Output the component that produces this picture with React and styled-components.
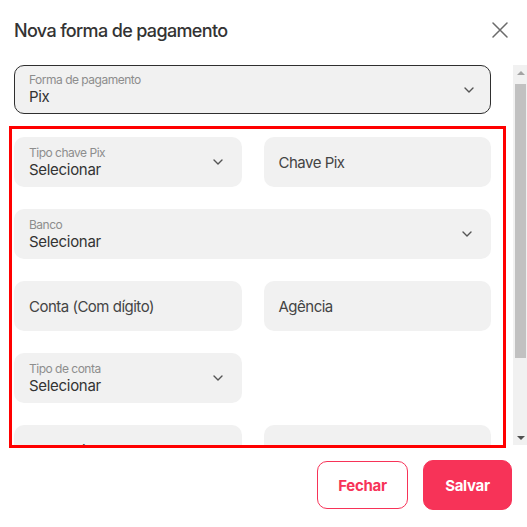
import React from "react";
import styled, { createGlobalStyle } from "styled-components";

const GlobalStyle = createGlobalStyle`
  html, body { margin: 0; padding: 0; background: #fff; }
  body { font-family: Inter, "Noto Sans", "Liberation Sans", sans-serif; color: #333; }
  * { box-sizing: border-box; }
`;

const Dialog = styled.div`
  position: relative;
  width: 527px;
  height: 527px;
  background: #fff;
  display: flex;
  flex-direction: column;
`;

const Header = styled.div`
  height: 60px;
  padding: 0 18px 0 14px;
  display: flex;
  align-items: center;
  justify-content: space-between;
`;

const Title = styled.h2`
  margin: 0;
  font-size: 18px;
  font-weight: 500;
  color: #333;
  letter-spacing: -0.65px;
`;

const CloseButton = styled.button`
  border: 0;
  background: none;
  padding: 0;
  width: 18px;
  height: 18px;
  display: flex;
  align-items: center;
  justify-content: center;
  color: #6b6b6b;
  cursor: pointer;
`;

const Body = styled.div`
  margin-top: 5px;
  height: 380px;
  display: flex;
`;

const Viewport = styled.div`
  flex: 1;
  overflow: hidden;
  padding: 0 22px 0 14px;
`;

const Scrollbar = styled.div`
  width: 14px;
  background: #f1f1f1;
  display: flex;
  flex-direction: column;
`;

const ScrollArrow = styled.div`
  height: 15px;
  display: flex;
  align-items: center;
  justify-content: center;
  padding-left: 1px;
`;

const ScrollTrack = styled.div`
  flex: 1;
  padding: 4px 1px 0 2px;
`;

const ScrollThumb = styled.div`
  height: 274px;
  background: #c1c1c1;
`;

const FieldBox = styled.div`
  position: relative;
  height: ${(p) => (p.$outlined ? "49px" : "50px")};
  border-radius: 10px;
  background: #f1f1f1;
  border: ${(p) => (p.$outlined ? "1px solid #2f2f2f" : "0")};
  padding: ${(p) => (p.$outlined ? "0 16px 0 14px" : "0 19px 0 15px")};
  display: flex;
  align-items: center;
  justify-content: space-between;
  grid-column: ${(p) => (p.$wide ? "1 / -1" : "auto")};
`;

const FieldText = styled.div`
  display: flex;
  flex-direction: column;
  justify-content: center;
`;

const Label = styled.span`
  font-size: 12px;
  line-height: 14px;
  color: #8d8d8d;
  letter-spacing: -0.5px;
`;

const Value = styled.span`
  font-size: 15px;
  line-height: 19px;
  color: #333;
  letter-spacing: -0.3px;
`;

const Placeholder = styled.span`
  font-size: 15px;
  color: #444;
  letter-spacing: -0.5px;
`;

const Grid = styled.div`
  margin-top: 23px;
  display: grid;
  grid-template-columns: 1fr 1fr;
  column-gap: 22px;
  row-gap: 22px;
  padding-bottom: 2px;
`;

const Footer = styled.div`
  flex: 1;
  display: flex;
  align-items: center;
  justify-content: flex-end;
  gap: 15px;
  padding: 0 15px 2px 0;
`;

const Button = styled.button`
  height: ${(p) => (p.$primary ? "50px" : "48px")};
  width: ${(p) => (p.$primary ? "89px" : "91px")};
  border-radius: 10px;
  font-family: Inter, "Liberation Sans", sans-serif;
  font-size: 15px;
  font-weight: 700;
  letter-spacing: -0.3px;
  border: 1px solid #f73358;
  background: ${(p) => (p.$primary ? "#f73358" : "#fff")};
  color: ${(p) => (p.$primary ? "#fff" : "#f73358")};
  cursor: pointer;
`;

const Highlight = styled.div`
  position: absolute;
  left: 9px;
  top: 126px;
  width: 497px;
  height: 322px;
  border: 3px solid #ff0000;
  pointer-events: none;
`;

const Chevron = () => (
  <svg width="10" height="6" viewBox="0 0 10 6" fill="none">
    <path d="M1 1l4 4 4-4" stroke="#555" strokeWidth="1.4" strokeLinecap="round" strokeLinejoin="round" />
  </svg>
);

const Triangle = ({ down }) => (
  <svg width="8" height="4" viewBox="0 0 8 4">
    <path d={down ? "M0 0h8L4 4z" : "M0 4h8L4 0z"} fill={down ? "#505050" : "#a3a3a3"} />
  </svg>
);

const Select = ({ label, value, outlined, wide }) => (
  <FieldBox $outlined={outlined} $wide={wide}>
    <FieldText>
      <Label>{label}</Label>
      <Value>{value}</Value>
    </FieldText>
    <Chevron />
  </FieldBox>
);

const Input = ({ placeholder }) => (
  <FieldBox>
    <Placeholder>{placeholder}</Placeholder>
  </FieldBox>
);

export default function App() {
  return (
    <>
      <GlobalStyle />
      <Dialog>
        <Header>
          <Title>Nova forma de pagamento</Title>
          <CloseButton aria-label="Fechar">
            <svg width="16" height="16" viewBox="0 0 16 16">
              <path d="M1 1l14 14M15 1L1 15" stroke="currentColor" strokeWidth="1.5" strokeLinecap="round" />
            </svg>
          </CloseButton>
        </Header>
        <Body>
          <Viewport>
            <Select outlined label="Forma de pagamento" value="Pix" />
            <Grid>
              <Select label="Tipo chave Pix" value="Selecionar" />
              <Input placeholder="Chave Pix" />
              <Select wide label="Banco" value="Selecionar" />
              <Input placeholder="Conta (Com dígito)" />
              <Input placeholder="Agência" />
              <Select label="Tipo de conta" value="Selecionar" />
              <div />
              <Input placeholder="Favorecido" />
              <Input placeholder="CNPJ/CPF" />
            </Grid>
          </Viewport>
          <Scrollbar>
            <ScrollArrow><Triangle /></ScrollArrow>
            <ScrollTrack><ScrollThumb /></ScrollTrack>
            <ScrollArrow><Triangle down /></ScrollArrow>
          </Scrollbar>
        </Body>
        <Footer>
          <Button>Fechar</Button>
          <Button $primary>Salvar</Button>
        </Footer>
        <Highlight />
      </Dialog>
    </>
  );
}
